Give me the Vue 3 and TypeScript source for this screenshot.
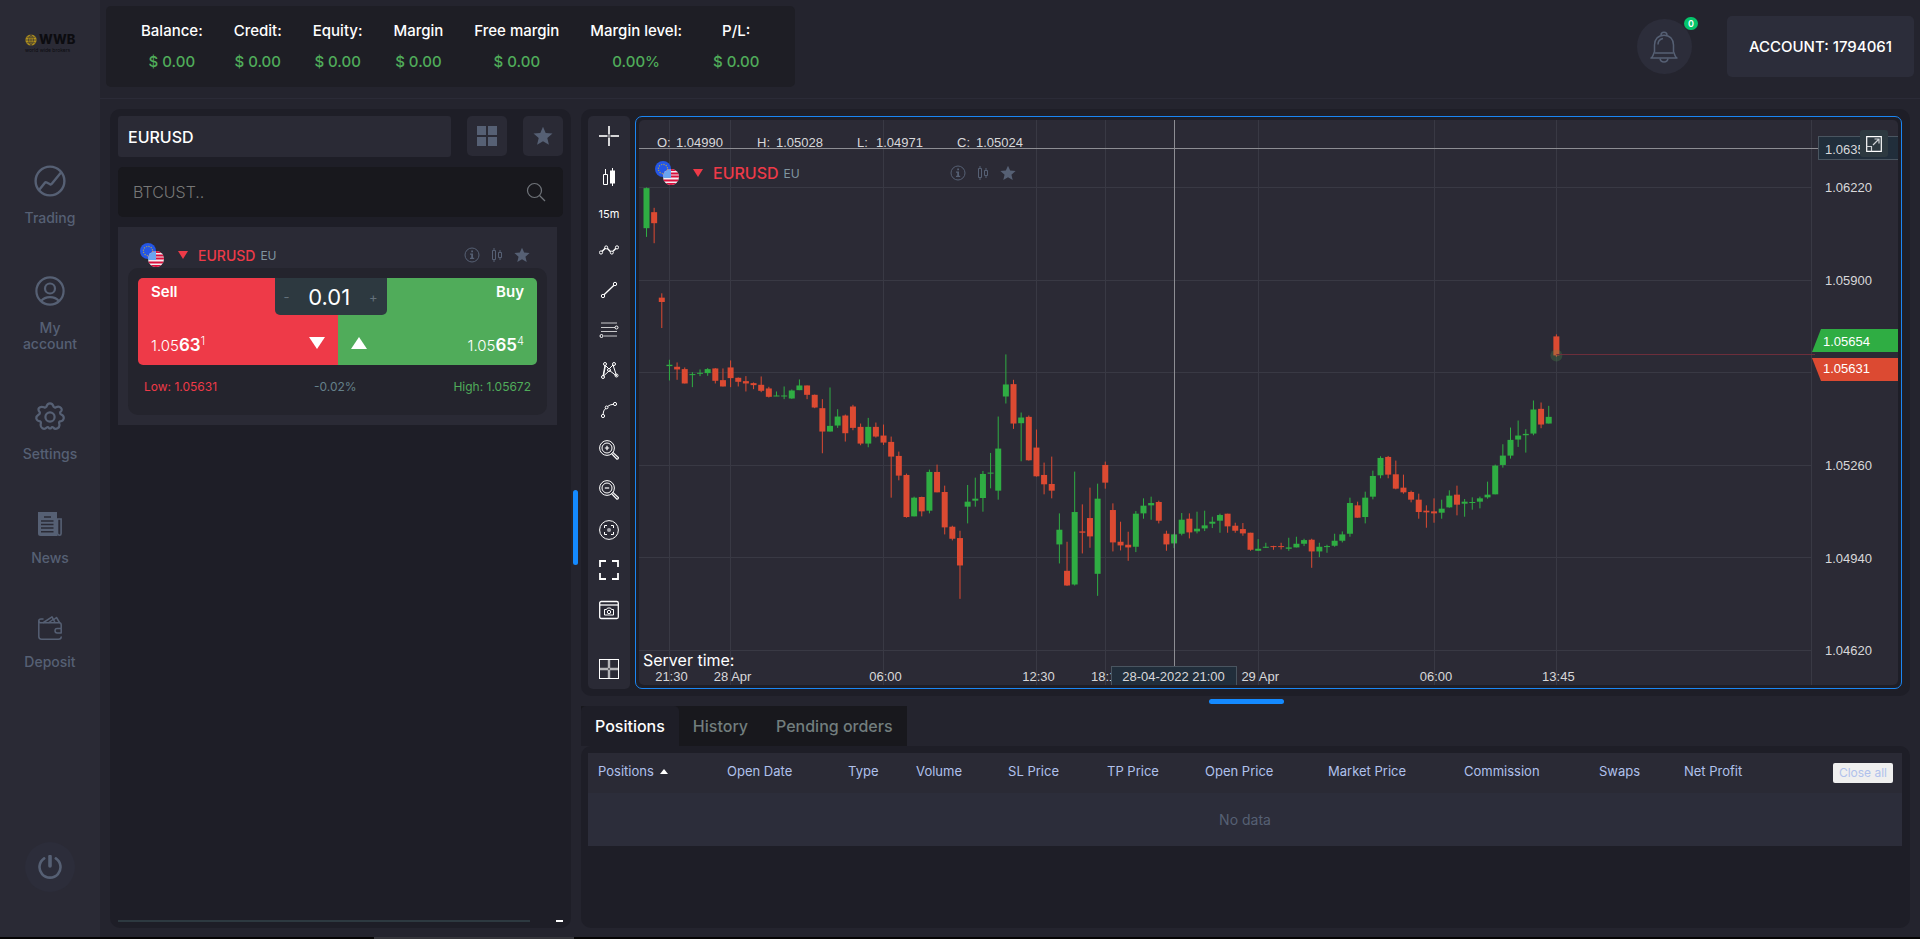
<script setup lang="ts">
import { computed, onBeforeUnmount, onMounted, ref } from 'vue'

interface Stat { label: string; value: string }
interface NavItem { label: string; icon: string; size: number }
interface Column { title: string; width: number }
type Candle = [up: 0 | 1, high: number, top: number, bottom: number, low: number]

const stats: Stat[] = [
  { label: 'Balance:', value: '$ 0.00' },
  { label: 'Credit:', value: '$ 0.00' },
  { label: 'Equity:', value: '$ 0.00' },
  { label: 'Margin', value: '$ 0.00' },
  { label: 'Free margin', value: '$ 0.00' },
  { label: 'Margin level:', value: '0.00%' },
  { label: 'P/L:', value: '$ 0.00' },
]

const nav: NavItem[] = [
  { label: 'Trading', icon: 'trading', size: 32 },
  { label: 'My account', icon: 'account', size: 30 },
  { label: 'Settings', icon: 'settings', size: 30 },
  { label: 'News', icon: 'news', size: 24 },
  { label: 'Deposit', icon: 'deposit', size: 24 },
]

const tools: { name: string; icon: string }[] = [
  { name: 'Trend points', icon: 'zigzag' },
  { name: 'Trend line', icon: 'line' },
  { name: 'Fibonacci', icon: 'fib' },
  { name: 'Pattern', icon: 'pattern' },
  { name: 'Curve', icon: 'curve' },
  { name: 'Zoom in', icon: 'zoomin' },
  { name: 'Zoom out', icon: 'zoomout' },
  { name: 'Auto focus', icon: 'focus' },
  { name: 'Full screen', icon: 'full' },
  { name: 'Snapshot', icon: 'snapshot' },
]

const columns: Column[] = [
  { title: 'Positions', width: 129 },
  { title: 'Open Date', width: 121 },
  { title: 'Type', width: 68 },
  { title: 'Volume', width: 92 },
  { title: 'SL Price', width: 99 },
  { title: 'TP Price', width: 98 },
  { title: 'Open Price', width: 123 },
  { title: 'Market Price', width: 136 },
  { title: 'Commission', width: 135 },
  { title: 'Swaps', width: 85 },
  { title: 'Net Profit', width: 148 },
]
const closeWidth = 80
const totalWidth = columns.reduce((s, c) => s + c.width, closeWidth)
const pct = (w: number) => `${((w / totalWidth) * 100).toFixed(2)}%`

const tabs = ['Positions', 'History', 'Pending orders']
const activeTab = ref('Positions')
const search = ref('')
const lot = ref('0.01')

/* Candles are kept per session, in ticks below the session's base level. */
const sessions: { base: number; candles: Candle[] }[] = [
  {
    base: -30,
    candles: [
      [1, 232, 234, 354, 380], [0, 293, 306, 339, 399], [0, 549, 562, 575, 653], [1, 748, 763, 767, 810],
      [0, 756, 769, 777, 808], [0, 771, 776, 819, 819], [1, 785, 791, 794, 830], [1, 777, 787, 790, 797],
      [1, 773, 776, 788, 796], [0, 773, 774, 811, 819], [0, 774, 809, 828, 828], [0, 750, 771, 803, 830],
      [0, 801, 802, 814, 828], [0, 797, 812, 819, 843], [0, 816, 818, 824, 836], [0, 798, 823, 841, 845],
      [0, 829, 834, 859, 861], [1, 843, 855, 857, 857], [1, 828, 855, 857, 866], [1, 837, 840, 864, 865],
      [1, 807, 825, 839, 839], [0, 825, 825, 853, 866], [0, 852, 853, 891, 893], [0, 866, 893, 963, 1028],
      [1, 831, 946, 963, 963], [1, 896, 918, 945, 952], [0, 912, 915, 968, 993], [0, 883, 888, 952, 959],
      [0, 939, 949, 999, 1004], [1, 922, 949, 999, 1010], [0, 936, 949, 978, 981], [0, 942, 975, 996, 1003],
    ],
  },
  {
    base: 630,
    candles: [
      [0, 318, 334, 378, 501], [0, 363, 376, 435, 449], [0, 429, 433, 559, 561], [1, 498, 501, 557, 557],
      [0, 498, 499, 542, 557], [1, 417, 424, 540, 548], [0, 402, 424, 485, 485], [0, 465, 484, 590, 611],
      [0, 585, 588, 624, 629], [0, 600, 622, 704, 804], [1, 463, 513, 528, 578], [1, 441, 504, 510, 528],
      [1, 421, 430, 502, 543], [1, 367, 426, 429, 473], [1, 258, 354, 480, 507], [1, 72, 162, 198, 219],
      [0, 148, 161, 279, 295], [1, 246, 261, 278, 392], [0, 255, 259, 389, 390], [0, 297, 351, 437, 438],
      [0, 396, 433, 461, 491], [0, 378, 460, 480, 503], [1, 548, 597, 641, 698], [0, 633, 720, 764, 765],
      [1, 423, 544, 761, 764], [0, 521, 602, 606, 668], [0, 471, 562, 617, 651], [1, 459, 504, 729, 795],
      [0, 393, 403, 456, 474], [0, 518, 538, 635, 662], [0, 573, 633, 644, 659], [0, 603, 642, 650, 690],
      [1, 541, 549, 648, 664], [1, 503, 525, 548, 564], [1, 498, 517, 524, 567], [0, 510, 514, 570, 578],
      [0, 600, 609, 641, 660], [1, 609, 611, 638, 652], [1, 547, 567, 609, 614], [0, 548, 564, 605, 623],
      [1, 543, 594, 602, 608], [1, 540, 584, 593, 601], [1, 558, 573, 579, 592], [1, 549, 553, 570, 606],
      [0, 549, 549, 587, 606], [0, 576, 585, 600, 606],
    ],
  },
  {
    base: 570,
    candles: [
      [0, 637, 655, 668, 675], [0, 666, 666, 717, 720], [1, 685, 714, 720, 720], [1, 696, 708, 711, 711],
      [0, 705, 706, 709, 717], [0, 696, 706, 709, 716], [1, 681, 710, 714, 720], [1, 678, 699, 710, 710],
      [1, 684, 688, 699, 706], [0, 684, 687, 722, 771], [1, 696, 708, 722, 739], [1, 702, 706, 708, 726],
      [1, 669, 690, 705, 708], [1, 662, 671, 690, 695], [1, 561, 577, 669, 678], [0, 573, 584, 621, 621],
      [1, 543, 561, 619, 638], [1, 480, 496, 558, 566], [1, 437, 442, 494, 503], [0, 436, 439, 492, 503],
      [0, 450, 491, 534, 536], [0, 492, 531, 545, 549], [0, 540, 544, 567, 575], [0, 549, 567, 604, 624],
      [0, 584, 600, 605, 651], [0, 563, 602, 608, 636], [1, 567, 594, 606, 624], [1, 539, 555, 590, 591],
      [0, 525, 552, 582, 614], [1, 565, 573, 579, 618], [1, 560, 574, 576, 597], [1, 558, 563, 573, 593],
      [1, 513, 552, 560, 564], [1, 462, 465, 551, 551], [1, 401, 435, 463, 471], [1, 351, 388, 435, 444],
      [1, 330, 375, 387, 409], [1, 356, 370, 374, 426], [1, 270, 297, 369, 374], [0, 276, 295, 342, 353],
      [1, 286, 319, 339, 339], [0, 72, 78, 135, 139],
    ],
  },
]

const chartBox = ref<HTMLElement | null>(null)
const width = ref(1259)
const height = ref(564)
let observer: ResizeObserver | null = null
onMounted(() => {
  observer = new ResizeObserver((entries) => {
    const box = entries[0].contentRect
    width.value = Math.round(box.width)
    height.value = Math.round(box.height)
  })
  if (chartBox.value) observer.observe(chartBox.value)
})
onBeforeUnmount(() => observer?.disconnect())

const axisWidth = 86
const plotWidth = computed(() => width.value - axisWidth)
const xAt = (i: number) => ((7.5 + i * 7.646) / 1173) * plotWidth.value
const yAt = (tick: number) => (tick / 3 / 564) * height.value
const crisp = (v: number) => Math.round(v - 0.5) + 0.5

const candles = computed(() =>
  sessions
    .flatMap((s) => s.candles.map((c) => ({ up: c[0] === 1, t: c.slice(1).map((v) => v + s.base) })))
    .map((c, i) => ({
      up: c.up,
      x: xAt(i),
      high: yAt(c.t[0]),
      top: yAt(c.t[1]),
      body: Math.max(1, yAt(c.t[2]) - yAt(c.t[1])),
      low: yAt(c.t[3]),
    })),
)

const priceTicks = [
  { tick: 202, text: '1.06220' },
  { tick: 480, text: '1.05900' },
  { tick: 757, text: '' },
  { tick: 1034, text: '1.05260' },
  { tick: 1311, text: '1.04940' },
  { tick: 1588, text: '1.04620' },
]
const timeTicks = [
  { i: 3, text: '21:30' },
  { i: 11, text: '28 Apr' },
  { i: 31, text: '06:00' },
  { i: 51, text: '12:30' },
  { i: 60, text: '18:15' },
  { i: 80, text: '29 Apr' },
  { i: 103, text: '06:00' },
  { i: 119, text: '13:45' },
]
const ohlc = [
  { key: 'O:', value: '1.04990' },
  { key: 'H:', value: '1.05028' },
  { key: 'L:', value: '1.04971' },
  { key: 'C:', value: '1.05024' },
]
</script>

<template>
  <div class="app">
    <svg class="defs" aria-hidden="true">
      <symbol id="i-flags" viewBox="0 0 24 24">
        <circle cx="8" cy="8" r="8" fill="#2456e6" />
        <circle cx="8" cy="8" r="4.6" fill="none" stroke="#b9a544" stroke-width="1.2" stroke-dasharray="1.1 1.3" />
        <clipPath id="us-clip"><circle cx="16" cy="16" r="8" /></clipPath>
        <g clip-path="url(#us-clip)">
          <rect x="8" y="8" width="16" height="16" fill="#f3eef2" />
          <path d="M8 9h16M8 12.5h16M8 15.5h16M8 19.500h16M8 23h16" stroke="#d80f3c" stroke-width="2" />
          <path d="M8 8h8v9H8z" fill="#6aa5f0" />
        </g>
      </symbol>
      <symbol id="i-star" viewBox="0 0 20 20">
        <path d="M10 0.8l2.7 6.2 6.8.6-5.2 4.5 1.6 6.7L10 15.3l-5.9 3.5 1.6-6.7L.5 7.600l6.800-.6z" fill="currentColor" />
      </symbol>
      <symbol id="i-info" viewBox="0 0 16 16">
        <circle cx="8" cy="8" r="7" fill="none" stroke="currentColor" stroke-width="1" />
        <path d="M7.200 3.600h1.800v1.600H7.200zM6 6.600h3v4.200h1.200v1.200H6v-1.200h1.200v-3H6z" fill="currentColor" />
      </symbol>
      <symbol id="i-candles" viewBox="0 0 12 16">
        <path d="M1.500 3.500h3v9h-3zM3 1v2.500M3 12.500V15M7.500 5.500h3v5h-3zM9 3v2.500M9 10.500V13" fill="none" stroke="currentColor" stroke-width="1" />
      </symbol>
      <symbol id="i-trading" viewBox="0 0 32 32">
        <g fill="none" stroke="currentColor" stroke-width="2.400" stroke-linecap="round" stroke-linejoin="round">
          <circle cx="16" cy="16" r="14.400" />
          <path d="M5.500 24.500l5.200-6.500q.8-1 2-.5l3.400 1.800q1 .4 1.700-.5L27 7.500" />
        </g>
      </symbol>
      <symbol id="i-account" viewBox="0 0 30 30">
        <g fill="none" stroke="currentColor" stroke-width="2.200">
          <circle cx="15" cy="15" r="13.600" />
          <circle cx="15" cy="12.500" r="5" />
          <path d="M6 25.200c2.400-3 5.400-4 9-4s6.600 1 9 4" />
        </g>
      </symbol>
      <symbol id="i-settings" viewBox="0 0 30 30">
        <g fill="none" stroke="currentColor" stroke-width="2.200" stroke-linejoin="round">
          <circle cx="15" cy="15" r="4.600" />
          <path d="M11.300 4.900 Q12.300 1.400 15 1.400 T18.700 4.900 Q19.600 6 21 5.200 Q24.200 3.800 26 6 T25.200 10.200 Q24.800 11.800 26.200 12.500 Q29.400 14 28.600 16.800 T25 19.300 Q23.700 20 24.200 21.500 Q25.200 24.800 22.600 26.300 T18.300 25.500 Q17.200 24.500 16.300 25.700 Q15 27.300 13.700 25.700 Q12.800 24.500 11.700 25.500 Q9.700 27.700 7.400 26.300 T5.800 21.500 Q6.300 20 5 19.300 Q2 19.100 1.400 16.800 T3.800 12.500 Q5.200 11.800 4.800 10.200 Q2.600 7.800 4 6 T9 5.200 Q10.400 6 11.300 4.900z" />
        </g>
      </symbol>
      <symbol id="i-news" viewBox="0 0 24 24">
        <path d="M0 0h19v21.500q0 1.300.8 2.500H2.500Q0 24 0 21.500z" fill="currentColor" />
        <path d="M19.500 7h3.600v14.500q0 1.700-1.600 1.700t-2-1.700z" fill="none" stroke="currentColor" stroke-width="1.600" />
        <path d="M6 5h7M3 9h12.500M3 12.500h12.500M3 16h12.500M3 19.800h12.500" stroke="#2a2a35" stroke-width="1.400" />
      </symbol>
      <symbol id="i-deposit" viewBox="0 0 24 24">
        <g fill="none" stroke="currentColor" stroke-width="1.500" stroke-linecap="round" stroke-linejoin="round">
          <path d="M5 3H3Q.8 3 .8 5v15.500Q.8 23.200 3.500 23.200h17q2.700 0 2.700-2.200" />
          <path d="M.8 5q0 1.800 2 1.800h18.400q2 0 2 2.200v3.500h-4q-2.200 0-2.200 2.200t2.200 2.200h4V13" />
          <path d="M5.500 6.500L14 .9l3 5.600M11 6.500l4-3M16 3.500l2.500-2 3 5" />
        </g>
      </symbol>
      <symbol id="i-power" viewBox="0 0 24 24">
        <path d="M6.200 3.400A10.500 10.500 0 1 0 17.800 3.400" fill="none" stroke="currentColor" stroke-width="2.600" stroke-linecap="round" />
        <path d="M12 1.500v9.500" stroke="currentColor" stroke-width="3.600" stroke-linecap="round" />
      </symbol>
      <symbol id="i-bell" viewBox="0 0 28 32">
        <g fill="none" stroke="currentColor" stroke-width="1.500" stroke-linejoin="round">
          <path d="M14 4.200c-6 0-9.500 4.300-9.500 9.800v6.500L3 24.500Q2.500 26 1 27h26q-1.500-1-2-2.500l-1.500-4V14c0-5.500-3.500-9.800-9.500-9.800z" />
          <path d="M4.500 22h19M11 4.200q0-3 3-3t3 3M10 27.500q.6 3.500 4 3.500t4-3.500M8 13.500q0-5 5-6" />
        </g>
      </symbol>
      <symbol id="i-cross" viewBox="0 0 20 20">
        <path d="M10 0v8.500M10 11.500V20M0 10h8.500M11.500 10H20M9.500 10h1" stroke="#d6d6d8" stroke-width="2" />
      </symbol>
      <symbol id="i-kind" viewBox="0 0 14 18">
        <path d="M1.500 6.500h4v10h-4zM3.500 1v5" fill="none" stroke="currentColor" />
        <path d="M8 2.500h5v13H8zM10 0h1v18h-1z" fill="currentColor" />
      </symbol>
      <symbol id="i-zigzag" viewBox="0 0 20 20">
        <g fill="none" stroke="currentColor" stroke-width="1">
          <path d="M3 11.500l3.500-3.600M8.200 8.300l3.400 3.400M14 11.200l3-3" stroke-width="1.500" />
          <circle cx="2" cy="12.500" r="1.600" /><circle cx="7.200" cy="7.400" r="1.500" /><circle cx="12.800" cy="12.600" r="1.500" /><circle cx="18" cy="7.400" r="1.600" />
        </g>
      </symbol>
      <symbol id="i-line" viewBox="0 0 20 20">
        <g fill="none" stroke="currentColor">
          <path d="M5 14.800L15 5.200" stroke-width="1.300" />
          <circle cx="4" cy="16" r="1.700" /><circle cx="16" cy="4" r="1.700" />
        </g>
      </symbol>
      <symbol id="i-fib" viewBox="0 0 20 20">
        <g fill="none" stroke="currentColor">
          <path d="M2 3h16M2 7.500h14M2 11.500h16M5 16h13" opacity=".75" />
          <circle cx="17.500" cy="7.500" r="1.500" /><circle cx="2.500" cy="16" r="1.500" />
        </g>
      </symbol>
      <symbol id="i-pattern" viewBox="0 0 20 20">
        <g fill="none" stroke="currentColor">
          <path d="M4.500 16l2-10.500L10 9l4-4 3.600 11L10.600 10.500zM6 5l-2 11" />
          <circle cx="4" cy="17" r="1.500" /><circle cx="6" cy="4" r="1.500" /><circle cx="10" cy="10" r="1.500" /><circle cx="15" cy="4" r="1.500" /><circle cx="17.500" cy="15.500" r="1.500" />
        </g>
      </symbol>
      <symbol id="i-curve" viewBox="0 0 20 20">
        <g fill="none" stroke="currentColor">
          <path d="M4 14.500q0-4 3-6.500M8.500 6.500Q11 4.500 14.500 4.200" />
          <circle cx="4" cy="16" r="1.600" /><circle cx="7.600" cy="7.400" r="1.400" /><circle cx="16" cy="4" r="1.600" />
        </g>
      </symbol>
      <symbol id="i-lens" viewBox="0 0 20 20">
        <g fill="none" stroke="currentColor">
          <circle cx="8" cy="8" r="7.400" /><circle cx="8" cy="8" r="5" />
          <path d="M12.500 13.500l5.400 5.600q1.500.2 1.500-1.500l-5.600-5.200" stroke-width="1.200" />
        </g>
      </symbol>
      <symbol id="i-zoomin" viewBox="0 0 20 20">
        <use href="#i-lens" /><path d="M8 5.800v4.400M5.800 8h4.400" stroke="currentColor" stroke-width="1.200" />
      </symbol>
      <symbol id="i-zoomout" viewBox="0 0 20 20">
        <use href="#i-lens" /><path d="M5.800 8h4.400" stroke="currentColor" stroke-width="1.200" />
      </symbol>
      <symbol id="i-focus" viewBox="0 0 20 20">
        <circle cx="10" cy="10" r="9.400" fill="none" stroke="currentColor" />
        <circle cx="10" cy="10" r="2" fill="#aaaab0" />
        <path d="M5.500 8V5.500H8M12 5.500h2.500V8M14.500 12v2.500H12M8 14.500H5.500V12" fill="none" stroke="currentColor" />
      </symbol>
      <symbol id="i-full" viewBox="0 0 20 20">
        <path d="M1 7V1h6M13 1h6v6M19 13v6h-6M7 19H1v-6" fill="none" stroke="currentColor" stroke-width="1.800" />
      </symbol>
      <symbol id="i-snapshot" viewBox="0 0 20 20">
        <g fill="none" stroke="currentColor">
          <rect x="0.700" y="1.500" width="18.600" height="17" rx="1.500" stroke-width="1.300" />
          <path d="M1 5h18" stroke-width="1.300" />
          <path d="M5.500 9.500h2L8.500 8h3l1 1.500h2v5.500h-9z" /><circle cx="10" cy="12" r="1.700" />
        </g>
      </symbol>
      <symbol id="i-layout" viewBox="0 0 20 20">
        <path d="M10 1v18M1 10h18" stroke="#b4b4b8" stroke-width="2.400" />
        <rect x="0.500" y="0.500" width="19" height="19" fill="none" stroke="#fff" />
        <rect x="9" y="9" width="2" height="2" fill="#6a6a70" />
      </symbol>
      <symbol id="i-expand" viewBox="0 0 16 16">
        <path d="M.7.700h14.600v14.600H.7z" fill="none" stroke="#fff" stroke-width="1.200" />
        <path d="M.7 10.500h4.800v4.800M7 9l6-6M8.500 3H13v4.500" fill="none" stroke="#cfd3d6" stroke-width="1.200" />
      </symbol>
    </svg>

    <div class="shell">
      <aside class="side">
        <div class="logo">
          <svg class="globe" viewBox="0 0 12 12" aria-hidden="true">
            <circle cx="6" cy="6" r="5.600" fill="#b3921c" />
            <path d="M6 .5v11M.5 6h11M1.500 3.200h9M1.500 8.800h9M6 .5Q1 6 6 11.500Q11 6 6 .5" fill="none" stroke="#2a2a35" stroke-width=".6" />
          </svg>
          <strong>WWB</strong>
          <small>world wide brokers</small>
        </div>
        <nav>
          <a v-for="n in nav" :key="n.label" href="#">
            <svg :width="n.size" :height="n.size" :class="{ big: n.size > 30 }" aria-hidden="true"><use :href="`#i-${n.icon}`" /></svg>
            <span>{{ n.label }}</span>
          </a>
        </nav>
        <button class="power" type="button" aria-label="Log out"><svg width="24" height="24"><use href="#i-power" /></svg></button>
      </aside>

      <div class="main">
        <header>
          <dl class="stats">
            <div v-for="s in stats" :key="s.label">
              <dt>{{ s.label }}</dt>
              <dd>{{ s.value }}</dd>
            </div>
          </dl>
          <button class="bell" type="button" aria-label="Notifications">
            <svg width="28" height="32"><use href="#i-bell" /></svg>
            <span class="badge">0</span>
          </button>
          <button class="account" type="button">ACCOUNT: 1794061</button>
        </header>

        <div class="work">
          <section class="market">
            <div class="row">
              <h2>EURUSD</h2>
              <button class="square" type="button" aria-label="Grid view">
                <svg width="20" height="20"><path d="M0 0h9v9H0zM11 0h9v9h-9zM0 11h9v9H0zM11 11h9v9h-9z" fill="currentColor" /></svg>
              </button>
              <button class="square" type="button" aria-label="Favourites"><svg width="20" height="20"><use href="#i-star" /></svg></button>
            </div>
            <div class="search">
              <input v-model="search" type="text" placeholder="BTCUST.." aria-label="Search instrument" />
              <svg width="20" height="20" aria-hidden="true"><circle cx="8.500" cy="8.500" r="7" fill="none" stroke="#70747a" stroke-width="1.200" /><path d="M13.500 13.500l5.500 5.500" stroke="#70747a" stroke-width="1.200" /></svg>
            </div>
            <article class="card">
              <div class="quote">
                <svg class="flags" width="24" height="24"><use href="#i-flags" /></svg>
                <svg class="down" width="10" height="8"><path d="M0 0h10L5 8z" fill="#ee3a48" /></svg>
                <b>EURUSD</b><i>EU</i>
                <span class="grow"></span>
                <button type="button" aria-label="Info"><svg width="16" height="16"><use href="#i-info" /></svg></button>
                <button type="button" aria-label="Chart"><svg width="12" height="16"><use href="#i-candles" /></svg></button>
                <button type="button" aria-label="Favourite"><svg width="16" height="16"><use href="#i-star" /></svg></button>
              </div>
              <div class="deal">
                <div class="trade">
                  <button class="sell" type="button">
                    <span class="side-name">Sell</span>
                    <span class="price"><span>1.05<b>63</b><sup>1</sup></span><svg width="16" height="12"><path d="M0 0h16L8 12z" fill="#fff" /></svg></span>
                  </button>
                  <button class="buy" type="button">
                    <span class="side-name">Buy</span>
                    <span class="price"><svg width="16" height="12"><path d="M0 12h16L8 0z" fill="#fff" /></svg><span>1.05<b>65</b><sup>4</sup></span></span>
                  </button>
                  <div class="lot">
                    <button type="button" aria-label="Decrease">-</button>
                    <input v-model="lot" type="text" aria-label="Lot size" />
                    <button type="button" aria-label="Increase">+</button>
                  </div>
                </div>
                <div class="range"><span class="low">Low: 1.05631</span><span>-0.02%</span><span class="high">High: 1.05672</span></div>
              </div>
            </article>
            <div class="foot"><hr /><button type="button" aria-label="Collapse"></button></div>
          </section>

          <div class="split-v"><span></span></div>

          <div class="right">
            <section class="chart-panel">
              <div class="toolbar">
                <button type="button" aria-label="Crosshair"><svg width="20" height="20"><use href="#i-cross" /></svg></button>
                <button type="button" aria-label="Chart type" class="t-kind"><svg width="14" height="18"><use href="#i-kind" /></svg></button>
                <button type="button" class="tf">15m</button>
                <button v-for="t in tools" :key="t.name" type="button" :aria-label="t.name"><svg width="20" height="20"><use :href="`#i-${t.icon}`" /></svg></button>
                <button type="button" aria-label="Layout" class="t-last"><svg width="20" height="20"><use href="#i-layout" /></svg></button>
              </div>
              <div class="frame">
                <div ref="chartBox" class="plot">
                  <svg class="chart" :width="width" :height="height" role="img" aria-label="EURUSD 15 minute candles">
                    <g stroke="#393944" stroke-width="1">
                      <line v-for="p in priceTicks" :key="p.tick" x1="0" :x2="plotWidth" :y1="crisp(yAt(p.tick))" :y2="crisp(yAt(p.tick))" />
                      <line v-for="t in timeTicks" :key="t.i" :x1="crisp(xAt(t.i))" :x2="crisp(xAt(t.i))" y1="0" :y2="height" />
                      <line :x1="plotWidth - 0.5" :x2="plotWidth - 0.5" y1="0" :y2="height" />
                    </g>
                    <g v-for="(c, i) in candles" :key="i" :fill="c.up ? '#2fad43' : '#dc4a32'">
                      <rect :x="c.x - 0.5" :y="c.high" width="1" :height="c.low - c.high" />
                      <rect :x="c.x - 3" :y="c.top" width="6" :height="c.body" />
                    </g>
                    <circle :cx="xAt(119)" :cy="yAt(705)" r="6" fill="#50a050" fill-opacity=".25" />
                    <line :x1="xAt(119)" :x2="plotWidth + 3" :y1="crisp(yAt(703))" :y2="crisp(yAt(703))" stroke="#6c2e3b" />
                    <g fill="#d8d8da">
                      <text v-for="p in priceTicks" :key="p.tick" :x="plotWidth + 13" :y="yAt(p.tick) + 5">{{ p.text }}</text>
                      <text v-for="t in timeTicks" :key="t.i" :x="xAt(t.i) + 2" :y="height - 4" text-anchor="middle">{{ t.text }}</text>
                      <g v-for="(o, i) in ohlc" :key="o.key">
                        <text :x="18 + i * 100" y="27">{{ o.key }}</text>
                        <text :x="37 + i * 100" y="27">{{ o.value }}</text>
                      </g>
                    </g>
                    <g stroke="#8d8d93" stroke-width="1">
                      <line x1="0" :x2="plotWidth + 6" :y1="crisp(yAt(86))" :y2="crisp(yAt(86))" />
                      <line :x1="crisp(xAt(69))" :x2="crisp(xAt(69))" y1="0" :y2="height - 19" />
                    </g>
                    <rect :x="crisp(xAt(69)) - 63" :y="height - 18.5" width="125" height="24" fill="#212e3b" stroke="#4a5560" />
                    <text :x="crisp(xAt(69)) - 1" :y="height - 4" text-anchor="middle" fill="#d8d8da">28-04-2022 21:00</text>
                    <rect :x="plotWidth + 6.5" :y="crisp(yAt(86)) - 12" width="90" height="23" fill="#212e3b" stroke="#4a5560" />
                    <text :x="plotWidth + 13" :y="yAt(86) + 5" fill="#d8d8da">1.06356</text>
                    <g :transform="`translate(${plotWidth} ${Math.round(yAt(703))})`">
                      <path d="M0-3L9-26H100V-3z" fill="#2fad43" />
                      <path d="M0 3L9 26H100V3z" fill="#dc4a32" />
                      <text x="11" y="-9" fill="#fff">1.05654</text>
                      <text x="11" y="18" fill="#fff">1.05631</text>
                    </g>
                  </svg>
                  <div class="quote over">
                    <svg class="flags" width="24" height="24"><use href="#i-flags" /></svg>
                    <svg class="down" width="10" height="8"><path d="M0 0h10L5 8z" fill="#ee3a48" /></svg>
                    <b>EURUSD</b><i>EU</i>
                    <span class="grow"></span>
                    <button type="button" aria-label="Info"><svg width="16" height="16"><use href="#i-info" /></svg></button>
                    <button type="button" aria-label="Chart"><svg width="12" height="16"><use href="#i-candles" /></svg></button>
                    <button type="button" aria-label="Favourite"><svg width="16" height="16"><use href="#i-star" /></svg></button>
                  </div>
                  <span class="server">Server time:</span>
                  <button class="expand" type="button" aria-label="Expand chart"><svg width="16" height="16"><use href="#i-expand" /></svg></button>
                </div>
              </div>
            </section>

            <div class="split-h"><span></span></div>

            <section class="orders">
              <div class="tabs" role="tablist">
                <button v-for="t in tabs" :key="t" type="button" role="tab" :aria-selected="t === activeTab" :class="{ on: t === activeTab }" @click="activeTab = t">{{ t }}</button>
              </div>
              <div class="table-box">
                <table>
                  <colgroup>
                    <col v-for="c in columns" :key="c.title" :style="{ width: pct(c.width) }" />
                    <col :style="{ width: pct(closeWidth) }" />
                  </colgroup>
                  <thead>
                    <tr>
                      <th v-for="(c, i) in columns" :key="c.title" scope="col">{{ c.title }}<svg v-if="i === 0" width="8" height="5"><path d="M0 5h8L4 0z" fill="#fff" /></svg></th>
                      <th class="close"><button type="button">Close all</button></th>
                    </tr>
                  </thead>
                  <tbody>
                    <tr><td :colspan="columns.length + 1">No data</td></tr>
                  </tbody>
                </table>
              </div>
            </section>
          </div>
        </div>
      </div>
    </div>
    <div class="edge"></div>
  </div>
</template>

<style>
body { margin: 0; background: #24242e; }
</style>

<style scoped>
* { box-sizing: border-box; }
.app { display: flex; flex-direction: column; min-height: 100vh; font-family: Inter, "Liberation Sans", sans-serif; color: #fff; background: #24242e; }
.defs { position: absolute; width: 0; height: 0; }
svg { display: block; flex: none; }
button { font: inherit; color: inherit; border: 0; padding: 0; background: none; cursor: pointer; }
.shell { flex: 1; display: flex; }
.edge { height: 2px; background: linear-gradient(90deg, #050404 0 19.5%, #35353a 19.5% 29.9%, #050404 29.9%); }

.side { flex: 0 0 100px; display: flex; flex-direction: column; align-items: center; background: #2a2a35; color: #566074; padding: 33px 0 45px; }
.logo { display: grid; grid-template-columns: 14px 36px; align-items: center; width: 50px; height: 20px; color: #0c0c10; }
.globe { width: 12px; height: 12px; }
.logo strong { font-size: 13px; line-height: 13px; font-weight: 800; }
.logo small { grid-column: 1 / -1; font-size: 5px; line-height: 6px; white-space: nowrap; }
nav { display: flex; flex-direction: column; gap: 50px; margin-top: 113px; }
nav a { display: flex; flex-direction: column; align-items: center; gap: 14px; width: 80px; color: inherit; text-decoration: none; text-align: center; font-size: 14px; line-height: 16px; font-weight: 500; }
nav a span { max-width: 60px; }
nav svg.big { margin: -1px 0; }
.power { display: grid; place-items: center; width: 50px; height: 50px; border-radius: 50%; background: #2c2d3a; margin-top: auto; }

.main { flex: 1; min-width: 0; display: flex; flex-direction: column; }
header { display: flex; align-items: flex-start; height: 99px; padding: 6px 6px 0; border-bottom: 1px solid #2b2b37; }
.stats { display: flex; gap: 31px; margin: 0 auto 0 0; height: 81px; padding: 16px 36px 16px 35px; border-radius: 5px; background: #1e1e25; text-align: center; font-size: 15px; line-height: 18px; font-weight: 500; white-space: nowrap; }
.stats dd { margin: 13px 0 0; color: #50ac5a; font-weight: 500; }
.bell { position: relative; display: grid; place-items: center; width: 55px; height: 55px; margin: 13px 35px 0 0; border-radius: 50%; background: #2c2d3a; color: #566074; }
.badge { position: absolute; top: -2px; right: -6px; width: 14px; height: 13px; border-radius: 7px; background: #05c46b; color: #fff; font-size: 9px; line-height: 13px; font-weight: 600; }
.account { height: 61px; margin-top: 10px; padding: 0 22px; border-radius: 5px; background: #2c2d3a; font-size: 15px; font-weight: 500; white-space: nowrap; }

.work { flex: 1; display: flex; padding: 10px 10px 9px; }
.market { flex: 0 0 461px; display: flex; flex-direction: column; padding: 7px 8px 6px; border-radius: 10px; background: #1e1e27; }
.row { display: flex; gap: 16px; }
h2 { flex: 1; height: 41px; margin: 0; padding: 0 10px; border-radius: 3px; background: #2a2a35; font-size: 16px; line-height: 42px; font-weight: 500; }
.square { display: grid; place-items: center; width: 40px; height: 40px; border-radius: 5px; background: #2a2a35; color: #566074; }
.search { display: flex; align-items: center; height: 50px; margin: 10px 0; padding: 0 17px 0 15px; border-radius: 5px; background: #18181d; }
.search input { flex: 1; min-width: 0; border: 0; outline: 0; padding: 0; background: none; color: #fff; font: 300 16px/20px Inter, sans-serif; }
.search input::placeholder { color: #777; }
.card { margin-right: 6px; padding: 10px; background: #2a2a35; }
.quote { display: flex; align-items: center; height: 31px; padding: 5px 17px 0 12px; }
.quote .down { margin-left: 14px; }
.quote b { margin-left: 10px; color: #ee3a48; font-size: 14px; font-weight: 500; }
.quote i { margin-left: 5px; color: #8095a0; font-size: 12px; font-style: normal; font-weight: 400; }
.quote .grow { flex: 1; }
.quote button { margin-left: 11px; color: #566074; }
.deal { padding: 10px 10px 19px; border-radius: 10px; background: #24242d; }
.trade { position: relative; display: grid; grid-template-columns: 1fr 1fr; height: 87px; }
.sell, .buy { display: flex; flex-direction: column; justify-content: space-between; padding: 5px 13px 7px; text-align: left; }
.sell { background: #ee3a48; border-radius: 5px 0 0 5px; }
.buy { background: #50ac5a; border-radius: 0 5px 5px 0; text-align: right; }
.side-name { font-size: 15px; line-height: 18px; font-weight: 600; }
.price { display: flex; justify-content: space-between; align-items: center; font-size: 15px; line-height: 24px; font-weight: 300; }
.price b { font-size: 17px; font-weight: 600; }
.price sup { font-size: 11px; line-height: 11px; }
.price svg { margin-top: -5px; }
.lot { position: absolute; left: 50%; top: 0; width: 112px; height: 37px; margin-left: -63px; display: flex; align-items: center; padding: 0 9px; border-radius: 0 0 5px 5px; background: #2d3940; color: #64717b; font-size: 13px; }
.lot input { flex: 1; min-width: 0; width: 0; padding: 0; border: 0; outline: 0; background: none; color: #fff; text-align: center; font: 400 22px/26px Inter, sans-serif; }
.range { display: flex; justify-content: space-between; margin-top: 13px; padding: 0 6px; font-size: 12px; line-height: 18px; color: #64808a; }
.low { color: #ee3a48; }
.high { color: #50ac5a; }
.foot { display: flex; align-items: center; gap: 26px; height: 3px; margin-top: auto; }
.foot hr { flex: 1; height: 2px; margin: 0; border: 0; background: #2d3940; }
.foot button { width: 7px; height: 2px; background: #fff; }

.split-v { flex: 0 0 10px; display: flex; align-items: center; justify-content: center; padding: 18px 1px 0 0; }
.split-v span { width: 5px; height: 75px; border-radius: 3px; background: #148aff; }
.right { flex: 1; min-width: 0; display: flex; flex-direction: column; }
.split-h { height: 10px; display: flex; align-items: center; justify-content: center; padding-left: 2px; }
.split-h span { width: 75px; height: 5px; border-radius: 3px; background: #148aff; }

.chart-panel { flex: 1; display: flex; gap: 5px; min-height: 580px; padding: 7px 8px 7px 7px; border-radius: 10px; background: #1e1e27; }
.toolbar { flex: 0 0 42px; display: flex; flex-direction: column; border-radius: 5px; background: #2a2a35; }
.toolbar button { display: grid; place-items: center; height: 40px; }
.toolbar .t-kind { height: 42px; }
.toolbar .tf { height: 32px; font-size: 11px; }
.toolbar .t-last { margin-top: auto; }
.frame { flex: 1; min-width: 0; display: flex; padding: 3px; border: 1px solid #1b86f2; border-radius: 7px; }
.plot { position: relative; flex: 1; min-width: 0; overflow: hidden; border-radius: 5px; background: #2b2a35; }
.chart { position: absolute; inset: 0; font: 13px "Liberation Sans", Arial, sans-serif; }
.over { position: absolute; left: 4px; top: 35px; width: 390px; }
.over b { font-size: 16px; }
.server { position: absolute; left: 4px; bottom: 15px; font-size: 16px; line-height: 20px; }
.expand { position: absolute; right: 10px; top: 10px; display: grid; place-items: center; width: 28px; height: 27px; border-radius: 3px; background: #2d3940; }

.tabs { display: flex; width: max-content; background: #18181d; }
.tabs button { height: 40px; padding: 0 14px; color: #727e7e; font-size: 16px; font-weight: 500; }
.tabs .on { color: #fff; background: #1e1e27; border-radius: 5px 5px 0 0; }
.table-box { min-height: 182px; padding: 7px 8px 7px 7px; border-radius: 10px; background: #1e1e27; }
table { width: 100%; table-layout: fixed; border-collapse: collapse; font-size: 13px; }
th { height: 40px; padding: 0 10px 4px; background: #2a2a35; color: #b0c1ec; text-align: left; font-weight: 400; white-space: nowrap; }
th svg { display: inline-block; margin-left: 6px; vertical-align: 2px; }
th.close { padding: 0 9px 0 0; text-align: right; }
th.close button { padding: 0 6px; border-radius: 2px; background: #efefef; color: #b0c1ec; font-size: 12px; line-height: 20px; }
td { height: 53px; padding: 0; background: #2c2d3a; color: #566074; text-align: center; font-size: 14px; }
</style>
